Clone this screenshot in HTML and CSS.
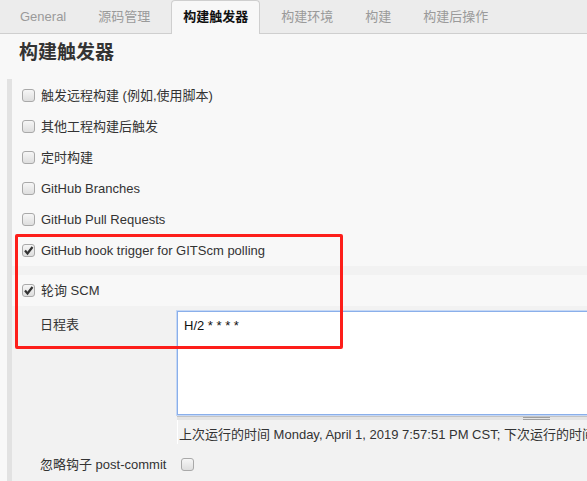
FILE: index.html
```html
<!DOCTYPE html>
<html lang="zh-CN">
<head>
<meta charset="utf-8">
<title>构建触发器</title>
<link rel="stylesheet" href="styles.css">
</head>
<body>
<div class="tabs">
  <div class="tab">General</div>
  <div class="tab">源码管理</div>
  <div class="tab active">构建触发器</div>
  <div class="tab">构建环境</div>
  <div class="tab">构建</div>
  <div class="tab">构建后操作</div>
</div>
<h1 class="title">构建触发器</h1>
<div class="section">
  <div class="row"><span class="cb"></span><span>触发远程构建 (例如,使用脚本)</span></div>
  <div class="row"><span class="cb"></span><span>其他工程构建后触发</span></div>
  <div class="row"><span class="cb"></span><span>定时构建</span></div>
  <div class="row"><span class="cb"></span><span>GitHub Branches</span></div>
  <div class="row"><span class="cb"></span><span>GitHub Pull Requests</span></div>
  <div class="row"><span class="cb checked"><svg viewBox="0 0 13 13" width="13" height="13"><path d="M3 6.5 L5.5 9.5 L10.5 3" fill="none" stroke="#333" stroke-width="2.2"/></svg></span><span>GitHub hook trigger for GITScm polling</span></div>
  <div class="band"></div>
  <div class="row"><span class="cb checked"><svg viewBox="0 0 13 13" width="13" height="13"><path d="M3 6.5 L5.5 9.5 L10.5 3" fill="none" stroke="#333" stroke-width="2.2"/></svg></span><span>轮询 SCM</span></div>
  <div class="nested">
    <div class="label">日程表</div>
    <div class="value">
      <div class="textarea">H/2 * * * *</div>
      <div class="grip"><span class="handle"></span></div>
      <div class="info">上次运行的时间 Monday, April 1, 2019 7:57:51 PM CST; 下次运行的时间 Monday, April 1, 2019 7:59:51 PM CST.</div>
    </div>
    <div class="label inline">忽略钩子 post-commit</div>
    <div class="value inline"><span class="cb"></span></div>
  </div>
  <div class="highlight"></div>
</div>
</body>
</html>
```
FILE: styles.css
```css
html, body {
  margin: 0;
  padding: 0;
  height: 100%;
  overflow: hidden;
}
body {
  background: #f8f8f8;
  font-family: "Liberation Sans", Arial, "Noto Sans CJK SC", sans-serif;
  font-size: 13px;
  color: #333;
}
.tabs {
  display: flex;
  align-items: flex-end;
  gap: 10px;
  height: 34px;
  padding-left: 9px;
  background: #ececec;
  border-bottom: 1px solid #cfcfcf;
  box-sizing: border-box;
}
.tab {
  height: 33px;
  line-height: 33px;
  padding: 0 11px;
  color: #9a9a9a;
  font-size: 13px;
  box-sizing: border-box;
}
.tab.active {
  line-height: 31px;
  background: #f8f8f8;
  color: #111;
  font-weight: bold;
  border: 1px solid #cfcfcf;
  border-bottom: none;
  border-radius: 4px 4px 0 0;
  margin-bottom: -1px;
  height: 34px;
}
.title {
  margin: 0;
  padding: 3px 0 0 19px;
  height: 45px;
  box-sizing: border-box;
  font-size: 19px;
  line-height: 27px;
  font-weight: bold;
  color: #333;
  font-family: "Noto Sans CJK SC", sans-serif;
}
.section {
  position: relative;
  margin-left: 7px;
  border-left: 5px solid #e2e2e2;
  padding-top: 1px;
  min-height: 420px;
}
.row {
  display: flex;
  align-items: center;
  height: 31px;
  padding-left: 10px;
  gap: 6px;
  line-height: 31px;
}
.cb {
  display: inline-block;
  width: 13px;
  height: 13px;
  box-sizing: border-box;
  border: 1px solid #a9a9a9;
  border-radius: 3px;
  background: linear-gradient(#f6f6f6, #dedede);
  flex: none;
  position: relative;
}
.cb svg {
  position: absolute;
  left: -1px;
  top: -1px;
}
.band {
  height: 9px;
  background: #f2f2f2;
}
.nested {
  background: #f2f2f2;
  display: grid;
  grid-template-columns: 137px 1fr;
  padding: 5px 0 0 28px;
  min-height: 200px;
  align-content: start;
}
.label {
  padding-top: 6px;
  line-height: 16px;
}
.value {
  white-space: nowrap;
}
.textarea {
  width: 440px;
  height: 104px;
  box-sizing: border-box;
  background: #fff;
  border: 1px solid #8aafea;
  box-shadow: 0 0 0 1px #c6d8f5;
  padding: 6px 6px;
  font-size: 13px;
  color: #111;
  line-height: 16px;
}
.grip {
  width: 440px;
  height: 4px;
  border-top: 1px solid #c4c4c4;
  background: #e4e4e4;
  box-sizing: border-box;
  margin-top: 1px;
  position: relative;
}
.handle {
  position: absolute;
  left: 346px;
  top: 0;
  width: 27px;
  height: 3px;
  border-top: 1px solid #9e9e9e;
  border-bottom: 1px solid #9e9e9e;
  box-sizing: border-box;
}
.info {
  line-height: 18px;
  padding: 6px 0 0 1px;
  border-left: 1px solid #fff;
}
.inline {
  display: flex;
  align-items: center;
  height: 31px;
  padding-top: 5px;
}
.value.inline {
  padding-left: 4px;
}
.highlight {
  position: absolute;
  left: 3px;
  top: 155px;
  width: 328px;
  height: 115px;
  box-sizing: border-box;
  border: 3px solid #fd1e1a;
  border-radius: 2px;
  pointer-events: none;
}
```
